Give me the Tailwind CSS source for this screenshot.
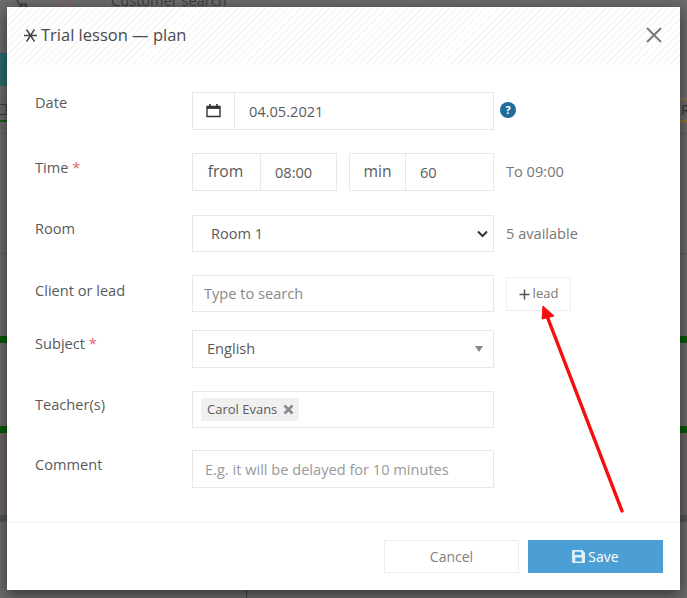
<!doctype html>
<html lang="en">
<head>
<meta charset="utf-8">
<title>Trial lesson — plan</title>
<script src="https://cdn.jsdelivr.net/npm/@tailwindcss/browser@4"></script>
</head>
<body class="m-0 overflow-hidden">
<div class="relative w-[687px] h-[598px] overflow-hidden bg-[#6c6c6c] font-['Open_Sans',sans-serif] text-[14.6px] text-[#5a5a5a]">

  <!-- dimmed page behind the dialog -->
  <div class="absolute inset-0" aria-hidden="true">
    <div class="absolute left-[111px] top-[-9px] text-[14.6px] leading-[18px] text-[#3f3f3f]">Customer search</div>
    <svg class="absolute left-[16px] top-0" width="14" height="7" viewBox="0 0 14 7" fill="none" stroke="#3f3f3f" stroke-width="1.5"><path d="M1 0 3 4h8"/><circle cx="5" cy="6" r="1"/><circle cx="10" cy="6" r="1"/></svg>
    <svg class="absolute left-[56px] top-0" width="18" height="7" viewBox="0 0 18 7" fill="none" stroke="#8f5a5a" stroke-width="1.5"><path d="M6 0 2 7h14L12 0"/></svg>
    <div class="absolute left-0 w-[7px] top-[53px] h-[33px] bg-[#2a6b69]"></div>
    <div class="absolute left-0 w-[7px] top-[97px] h-[2px] bg-[#5c705c]"></div>
    <div class="absolute left-[-2px] top-[104px] w-[9px] h-[11px] border border-[#3f3f3f]"></div>
    <div class="absolute left-0 w-[7px] top-[120px] h-[2px] bg-[#14611a]"></div>
    <div class="absolute left-[680px] right-0 top-[98px] h-[2px] bg-[#8a7550]"></div>
    <div class="absolute left-[681px] top-[101px] text-[14px] leading-[18px] text-[#333]">R</div>
    <div class="absolute left-[680px] right-0 top-[120px] h-[3px] bg-[#8c7440]"></div>
    <div class="absolute left-0 right-0 top-[133px] h-px bg-[#626262]"></div>
    <div class="absolute left-0 right-0 top-[253px] h-px bg-[#4f6b4f]"></div>
    <div class="absolute left-0 right-0 top-[336px] h-[7px] bg-[#075a07]"></div>
    <div class="absolute left-0 right-0 top-[426px] h-[7px] bg-[#075a07]"></div>
    <div class="absolute left-0 right-0 top-[433px] h-[82px] bg-[#6b6663]"></div>
    <div class="absolute left-0 right-0 top-[515px] h-[7px] bg-[#545454]"></div>
    <div class="absolute left-0 w-[7px] top-[521px] h-px bg-[#3f6a3f]"></div>
    <div class="absolute left-[246px] top-[585px] w-px h-[13px] bg-[#444]"></div>
  </div>

  <!-- dialog -->
  <div class="absolute left-[7px] top-[7px] w-[673px] h-[583px] flex flex-col bg-white shadow-[0_4px_14px_rgba(0,0,0,0.55)]">
    <header class="h-[58px] shrink-0 flex items-center justify-between pl-[16px] pr-[18px] pb-[2px] bg-[repeating-linear-gradient(135deg,#ffffff_0,#ffffff_3px,#f7f7f7_3px,#f7f7f7_5px)]">
      <h1 class="flex items-center gap-[3px] text-[16.5px] font-medium text-[#4a4a4a] leading-[20px]">
        <svg width="15" height="15" viewBox="0 0 15 15" fill="none" stroke="#444" stroke-width="1.4"><path d="M1 7.5h13M3.5 1.5l8 12M11.5 1.5l-8 12"/></svg>
        Trial lesson — plan
      </h1>
      <svg width="16" height="16" viewBox="0 0 16 16" fill="none" stroke="#7a7a7a" stroke-width="2"><path d="M1 1l14 14M15 1 1 15"/></svg>
    </header>

    <form class="relative flex-1 flex flex-col pt-[27px] pl-[28px]">
      <!-- Date -->
      <div class="flex items-start">
        <label class="w-[157px] pt-[1px] leading-[19px]">Date</label>
        <div class="flex w-[302px] h-[38px] border border-[#e8e8e8]">
          <span class="w-[42px] shrink-0 flex items-center justify-center pb-[2px] border-r border-[#e8e8e8]">
            <svg width="15" height="15" viewBox="0 0 15 15" fill="none" stroke="#333"><path stroke-width="1.4" d="M1 3.5h13v10H1z"/><path stroke-width="2.4" d="M1 4.7h13"/><path stroke-width="1.6" d="M4 1v2.5M11 1v2.5"/></svg>
          </span>
          <input value="04.05.2021" class="flex-1 min-w-0 pl-[14px] pt-[2px] text-[#5a5a5a] outline-none">
        </div>
        <svg class="ml-[6px] mt-[10px]" width="16" height="16" viewBox="0 0 16 16"><circle cx="8" cy="8" r="8" fill="#1f6b9c"/><text x="8" y="12" text-anchor="middle" font-size="11" font-weight="700" font-family="Open Sans" fill="#fff">?</text></svg>
      </div>

      <!-- Time -->
      <div class="flex items-start mt-[23px]">
        <label class="w-[157px] pt-[5px] leading-[19px]">Time <span class="text-[#e4606d]">*</span></label>
        <div class="flex w-[145px] h-[38px]">
          <span class="w-[69px] flex items-center justify-center pr-[2px] border border-[#e8e8e8] text-[15.7px]">from</span>
          <input value="08:00" class="w-[76px] pl-[14px] pt-[2px] border border-l-0 border-[#e8e8e8] text-[#5a5a5a] outline-none">
        </div>
        <div class="flex w-[145px] h-[38px] ml-[12px]">
          <span class="w-[57px] flex items-center justify-center border border-[#e8e8e8] text-[15.7px]">min</span>
          <input value="60" class="w-[88px] pl-[14px] pt-[2px] border border-l-0 border-[#e8e8e8] text-[#5a5a5a] outline-none">
        </div>
        <span class="ml-[12px] h-[38px] flex items-center text-[#777]">To 09:00</span>
      </div>

      <!-- Room -->
      <div class="flex items-start mt-[24px]">
        <label class="w-[157px] pt-[4px] leading-[19px]">Room</label>
        <div class="relative w-[302px] h-[37px]">
          <select class="w-full h-full appearance-none pl-[18px] border border-[#e8e8e8] bg-white text-[#5a5a5a] outline-none"><option>Room 1</option></select>
          <svg class="absolute right-[6px] top-[15px]" width="11" height="8" viewBox="0 0 11 8" fill="none" stroke="#333" stroke-width="2"><path d="M1 1.5l4.5 4.5L10 1.5"/></svg>
        </div>
        <span class="ml-[12px] h-[37px] flex items-center text-[#777]">5 available</span>
      </div>

      <!-- Client or lead -->
      <div class="flex items-start mt-[23px]">
        <label class="w-[157px] pt-[6px] leading-[19px]">Client or lead</label>
        <input placeholder="Type to search" class="w-[302px] h-[37px] pl-[11px] pb-[2px] border border-[#e8e8e8] outline-none placeholder:text-[#888]">
        <button type="button" class="ml-[12px] mt-[2px] w-[65px] h-[34px] flex items-center justify-center gap-[3px] border border-[#eeeeee] text-[13px] text-[#777]">
          <svg width="11" height="11" viewBox="0 0 11 11" stroke="#555" stroke-width="1.5"><path d="M0.5 5.5h10M5.5 0.5v10"/></svg>lead
        </button>
      </div>

      <!-- Subject -->
      <div class="flex items-start mt-[18px]">
        <label class="w-[157px] pt-[4px] leading-[19px]">Subject <span class="text-[#e4606d]">*</span></label>
        <div class="relative w-[302px] h-[38px] flex items-center pl-[14px] border border-[#e8e8e8]">
          English
          <span class="absolute right-[10px] top-[15px] w-0 h-0 border-x-[4px] border-x-transparent border-t-[6px] border-t-[#888]"></span>
        </div>
      </div>

      <!-- Teachers -->
      <div class="flex items-start mt-[23px]">
        <label class="w-[157px] pt-[4px] leading-[19px]">Teacher(s)</label>
        <div class="w-[302px] h-[37px] flex items-start pl-[8px] pt-[6px] border border-[#e8e8e8]">
          <span class="h-[23px] flex items-center gap-[6px] pl-[6px] pr-[5px] bg-[#f0f0f0] rounded-[2px] text-[13px]">
            Carol Evans
            <svg width="11" height="11" viewBox="0 0 11 11" stroke="#8a8a8a" stroke-width="2.6"><path d="M1.5 1.5l8 8M9.5 1.5l-8 8"/></svg>
          </span>
        </div>
      </div>

      <!-- Comment -->
      <div class="flex items-start mt-[22px]">
        <label class="w-[157px] pt-[5px] leading-[19px]">Comment</label>
        <input placeholder="E.g. it will be delayed for 10 minutes" class="w-[302px] h-[38px] pl-[12px] border border-[#e8e8e8] outline-none placeholder:text-[#999]">
      </div>

      <!-- annotation arrow -->
      <svg class="absolute left-[-7px] top-[-65px] pointer-events-none" width="687" height="598" viewBox="0 0 687 598" fill="none" aria-hidden="true">
        <path d="M622 511 547 316" stroke="#f70d0d" stroke-width="3.4" stroke-linecap="round"/>
        <path d="M543 306 542 319 554 316z" fill="#f70d0d" stroke="#f70d0d" stroke-linejoin="round"/>
      </svg>
    </form>

    <footer class="h-[68px] shrink-0 flex items-start justify-end gap-[9px] pt-[17px] pr-[17px] border-t border-[#f1f1f1]">
      <button type="button" class="w-[135px] h-[33px] border border-[#eeeeee] bg-white text-[14px] text-[#808080]">Cancel</button>
      <button type="button" class="w-[135px] h-[33px] flex items-center justify-center gap-[3px] bg-[#4b9fd4] text-[14px] text-white font-medium">
        <svg width="13" height="13" viewBox="0 0 12 12"><path fill="#dff0fa" fill-rule="evenodd" d="M1 0h8.5L12 2.5V11a1 1 0 0 1-1 1H1a1 1 0 0 1-1-1V1a1 1 0 0 1 1-1zm1.5 1.5v3h6v-3zM3 7v3.5h6V7z"/></svg>
        Save
      </button>
    </footer>
  </div>
</div>
</body>
</html>
